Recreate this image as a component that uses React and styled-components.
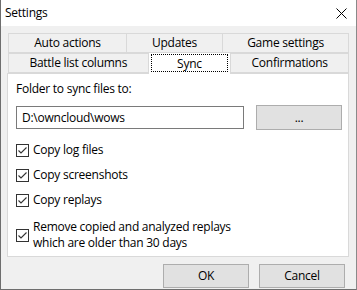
import React, { useState } from "react";
import styled, { createGlobalStyle } from "styled-components";

const GlobalStyle = createGlobalStyle`
  html, body {
    margin: 0;
    padding: 0;
    background: #ffffff;
  }
  * {
    box-sizing: border-box;
  }
`;

const Window = styled.div`
  width: 357px;
  height: 290px;
  display: flex;
  flex-direction: column;
  background: #f0f0f0;
  border-left: 1px solid #6e6e6e;
  border-right: 1px solid #8a8a8a;
  border-bottom: 1px solid #6e6e6e;
  font-family: "Segoe UI", "Open Sans", "Noto Sans", sans-serif;
  font-size: 12px;
  letter-spacing: -0.25px;
  color: #000;
  overflow: hidden;
`;

const TitleBar = styled.div`
  height: 26px;
  flex-shrink: 0;
  display: flex;
  align-items: center;
  justify-content: space-between;
  background: #ffffff;
  padding: 0 9px 0 4px;
`;

const Title = styled.div`
  font-size: 12px;
  padding-bottom: 1px;
`;

const CloseIcon = styled.svg`
  width: 11px;
  height: 11px;
`;

const Body = styled.div`
  flex: 1;
  display: flex;
  flex-direction: column;
  padding: 7px 7px 0 6px;
`;

const TabRow = styled.div`
  display: flex;
  align-items: flex-end;
  height: 20px;
  padding-left: 1px;
  position: relative;
  z-index: ${(p) => p.$z};
`;

const Tab = styled.div`
  width: ${(p) => p.$width}px;
  height: ${(p) => (p.$active ? 22 : 20)}px;
  display: flex;
  align-items: center;
  justify-content: center;
  background: ${(p) => (p.$active ? "#ffffff" : "#f0f0f0")};
  border: 1px solid #d9d9d9;
  border-bottom: ${(p) => (p.$active ? "none" : "1px solid #d9d9d9")};
  margin-left: ${(p) => (p.$first ? 0 : -1)}px;
  margin-bottom: ${(p) => (p.$active ? -1 : 0)}px;
  position: relative;
  z-index: ${(p) => (p.$active ? 2 : 1)};
  padding-bottom: ${(p) => (p.$active ? 2 : 1)}px;
  cursor: default;
`;

const FocusLabel = styled.span`
  display: flex;
  align-items: center;
  justify-content: center;
  width: 77px;
  height: 18px;
  margin-top: 1px;
  border: 1px dotted #000;
`;

const Panel = styled.div`
  width: 342px;
  height: 184px;
  background: #ffffff;
  border: 1px solid #d9d9d9;
  display: flex;
  flex-direction: column;
  padding: 7px 6px 0 8px;
  position: relative;
  z-index: 1;
`;

const Label = styled.div`
  height: 16px;
  line-height: 16px;
`;

const FolderRow = styled.div`
  display: flex;
  align-items: center;
  gap: 12px;
  margin-top: 8px;
`;

const TextBox = styled.div`
  width: 228px;
  height: 23px;
  border: 1px solid #7a7a7a;
  display: flex;
  align-items: center;
  padding-left: 5px;
  padding-bottom: 1px;
  background: #fff;
`;

const Button = styled.button`
  width: ${(p) => p.$width}px;
  height: ${(p) => p.$height || 24}px;
  background: #e1e1e1;
  border: 1px solid #adadad;
  font-family: inherit;
  font-size: 12px;
  letter-spacing: inherit;
  color: #000;
  padding: 0 0 1px;
  margin: 0;
  display: flex;
  align-items: center;
  justify-content: center;
`;

const CheckList = styled.div`
  display: flex;
  flex-direction: column;
  gap: 9px;
  margin-top: 12px;
`;

const CheckRow = styled.label`
  display: flex;
  align-items: center;
  gap: 4px;
  min-height: 16px;
  margin-top: ${(p) => (p.$multi ? 2 : 0)}px;
`;

const Box = styled.span`
  width: 13px;
  height: 13px;
  flex-shrink: 0;
  border: 1px solid #333;
  background: #fff;
  display: flex;
  align-items: center;
  justify-content: center;
`;

const CheckText = styled.span`
  line-height: 16px;
`;

const Footer = styled.div`
  display: flex;
  justify-content: flex-end;
  gap: 10px;
  padding: 7px 4px 0 0;
`;

function Checkbox({ checked, onToggle, multi, children }) {
  return (
    <CheckRow onClick={onToggle} $multi={multi}>
      <Box>
        {checked && (
          <svg width="11" height="11" viewBox="0 0 11 11">
            <path d="M1.5 5.5 L4 8 L9.5 2.5" fill="none" stroke="#333" strokeWidth="1.1" />
          </svg>
        )}
      </Box>
      <CheckText>{children}</CheckText>
    </CheckRow>
  );
}

const topTabs = [
  { name: "Auto actions", width: 119 },
  { name: "Updates", width: 97 },
  { name: "Game settings", width: 127 },
];

const bottomTabs = [
  { name: "Battle list columns", width: 141 },
  { name: "Sync", width: 84, active: true },
  { name: "Confirmations", width: 119 },
];

export default function App() {
  const [checks, setChecks] = useState([true, true, true, true]);

  const toggle = (i) =>
    setChecks((prev) => prev.map((c, idx) => (idx === i ? !c : c)));

  const options = [
    "Copy log files",
    "Copy screenshots",
    "Copy replays",
    <>
      Remove copied and analyzed replays
      <br />
      which are older than 30 days
    </>,
  ];

  return (
    <>
      <GlobalStyle />
      <Window>
        <TitleBar>
          <Title>Settings</Title>
          <CloseIcon viewBox="0 0 11 11">
            <path d="M0.5 0.5 L10.5 10.5 M10.5 0.5 L0.5 10.5" stroke="#000" strokeWidth="1" />
          </CloseIcon>
        </TitleBar>
        <Body>
          <TabRow $z={1}>
            {topTabs.map((t, i) => (
              <Tab key={t.name} $width={t.width} $first={i === 0}>
                {t.name}
              </Tab>
            ))}
          </TabRow>
          <TabRow $z={2}>
            {bottomTabs.map((t, i) => (
              <Tab key={t.name} $width={t.width} $first={i === 0} $active={t.active}>
                {t.active ? <FocusLabel>{t.name}</FocusLabel> : t.name}
              </Tab>
            ))}
          </TabRow>
          <Panel>
            <Label>Folder to sync files to:</Label>
            <FolderRow>
              <TextBox>D:\owncloud\wows</TextBox>
              <Button $width={86} $height={25}>...</Button>
            </FolderRow>
            <CheckList>
              {options.map((o, i) => (
                <Checkbox
                  key={i}
                  checked={checks[i]}
                  multi={i === 3}
                  onToggle={() => toggle(i)}
                >
                  {o}
                </Checkbox>
              ))}
            </CheckList>
          </Panel>
          <Footer>
            <Button $width={86}>OK</Button>
            <Button $width={86}>Cancel</Button>
          </Footer>
        </Body>
      </Window>
    </>
  );
}
